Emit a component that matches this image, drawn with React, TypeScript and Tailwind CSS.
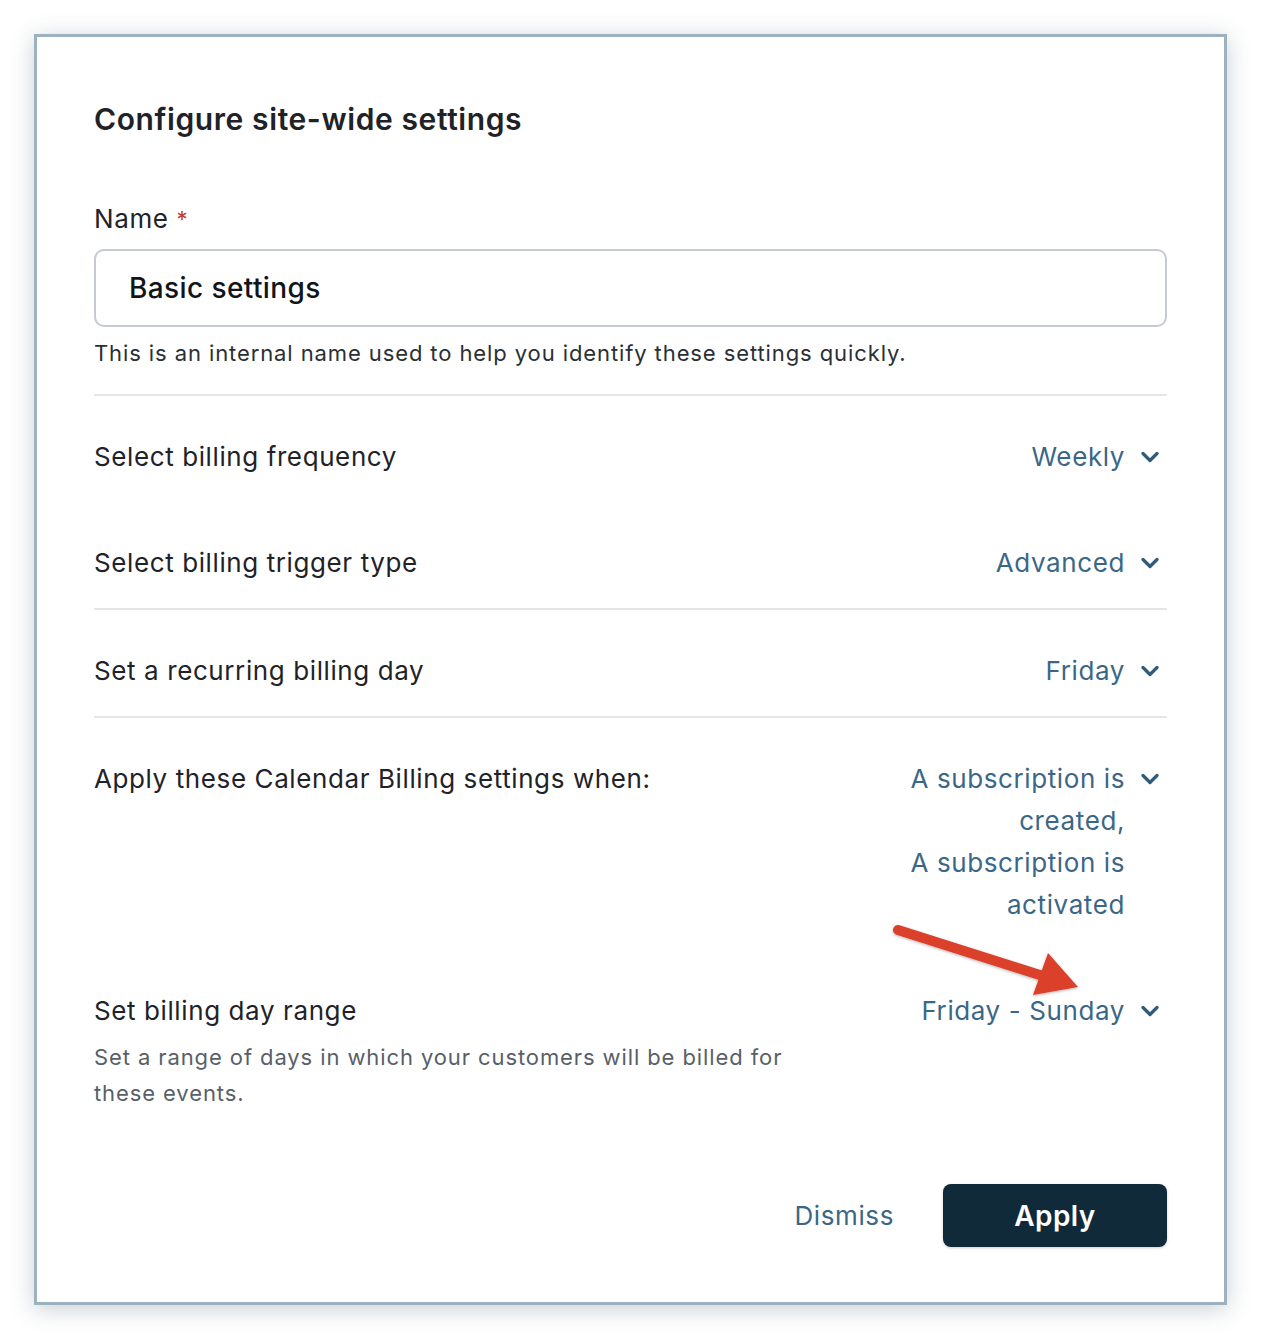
import React from "react";

const FONT = "font-['Inter','Noto_Sans',sans-serif]";

function Chevron() {
  return (
    <span className="flex h-[42px] w-[20px] items-center ml-[16px] mr-[6px] shrink-0">
      <svg width="18" height="12" viewBox="0 0 18 12" fill="none">
        <path d="M2 2.5 L9 9.5 L16 2.5" stroke="#2f5b7c" strokeWidth="3.2" strokeLinecap="round" strokeLinejoin="round" />
      </svg>
    </span>
  );
}

function Row({ label, value, desc }: { label: string; value: React.ReactNode; desc?: string }) {
  return (
    <div className="flex justify-between items-start">
      <div className="flex flex-col">
        <div className="text-[26px] leading-[42px] tracking-[0.6px] text-[#1f2328]">{label}</div>
        {desc && (
          <div className="mt-[7px] max-w-[700px] text-[22px] leading-[36px] text-[#585f68] tracking-[0.9px]">{desc}</div>
        )}
      </div>
      <div className="flex items-start">
        <div className="max-w-[230px] text-right text-[26px] leading-[42px] tracking-[0.6px] text-[#3b6787]">{value}</div>
        <Chevron />
      </div>
    </div>
  );
}

export default function App() {
  return (
    <div className={`${FONT} min-h-[1340px] w-[1262px] bg-white pl-[34px] pt-[34px]`}>
      <div className="relative w-[1193px] h-[1271px] border-[3px] border-[#9db2c0] bg-white shadow-[0_4px_22px_rgba(60,80,100,0.28)] px-[57px] pt-[62px] pb-[55px] flex flex-col">
        <h1 className="text-[30px] leading-[40px] font-semibold tracking-[0.6px] text-[#1f2328]">Configure site-wide settings</h1>

        <div className="mt-[64px] text-[26px] leading-[32px] tracking-[0.6px] text-[#1f2328]">
          Name <span className="text-[#c0392b] text-[22px] align-top">*</span>
        </div>
        <div className="mt-[14px] h-[78px] rounded-[10px] border-2 border-[#c6cad1] flex items-center pl-[33px] text-[28px] font-medium tracking-[0.4px] text-[#111418]">
          Basic settings
        </div>
        <div className="mt-[11px] text-[22px] leading-[30px] text-[#2a2f35] tracking-[0.9px]">
          This is an internal name used to help you identify these settings quickly.
        </div>

        <div className="mt-[26px] border-t-2 border-[#e3e5e8] pt-[40px] pb-[24px] flex flex-col gap-[64px]">
          <Row label="Select billing frequency" value="Weekly" />
          <Row label="Select billing trigger type" value="Advanced" />
        </div>
        <div className="border-t-2 border-[#e3e5e8] pt-[40px] pb-[24px]">
          <Row label="Set a recurring billing day" value="Friday" />
        </div>
        <div className="border-t-2 border-[#e3e5e8] pt-[40px] flex flex-col gap-[64px]">
          <Row
            label="Apply these Calendar Billing settings when:"
            value={
              <>
                A subscription is created,
                <br />
                A subscription is activated
              </>
            }
          />
          <Row
            label="Set billing day range"
            value="Friday - Sunday"
            desc="Set a range of days in which your customers will be billed for these events."
          />
        </div>

        <div className="mt-auto flex justify-end items-center gap-[49px]">
          <button className="text-[26px] tracking-[0.6px] text-[#3b6787]">Dismiss</button>
          <button className="w-[224px] h-[63px] rounded-[8px] bg-[#112a3a] text-white text-[28px] font-semibold tracking-[0.4px] shadow-[0_1px_3px_rgba(0,0,0,0.2)]">
            Apply
          </button>
        </div>

        <svg
          className="absolute left-[850px] top-[880px] pointer-events-none"
          width="220"
          height="130"
          viewBox="0 0 220 130"
          fill="none"
        >
          <defs>
            <filter id="sh" x="-20%" y="-20%" width="140%" height="140%">
              <feDropShadow dx="0" dy="1" stdDeviation="1.5" floodColor="#000" floodOpacity="0.3" />
            </filter>
          </defs>
          <g filter="url(#sh)">
            <line x1="11" y1="13" x2="178" y2="66" stroke="#da3f2c" strokeWidth="10" strokeLinecap="round" />
            <polygon points="161,36 191,70 146,78" fill="#da3f2c" />
          </g>
        </svg>
      </div>
    </div>
  );
}
